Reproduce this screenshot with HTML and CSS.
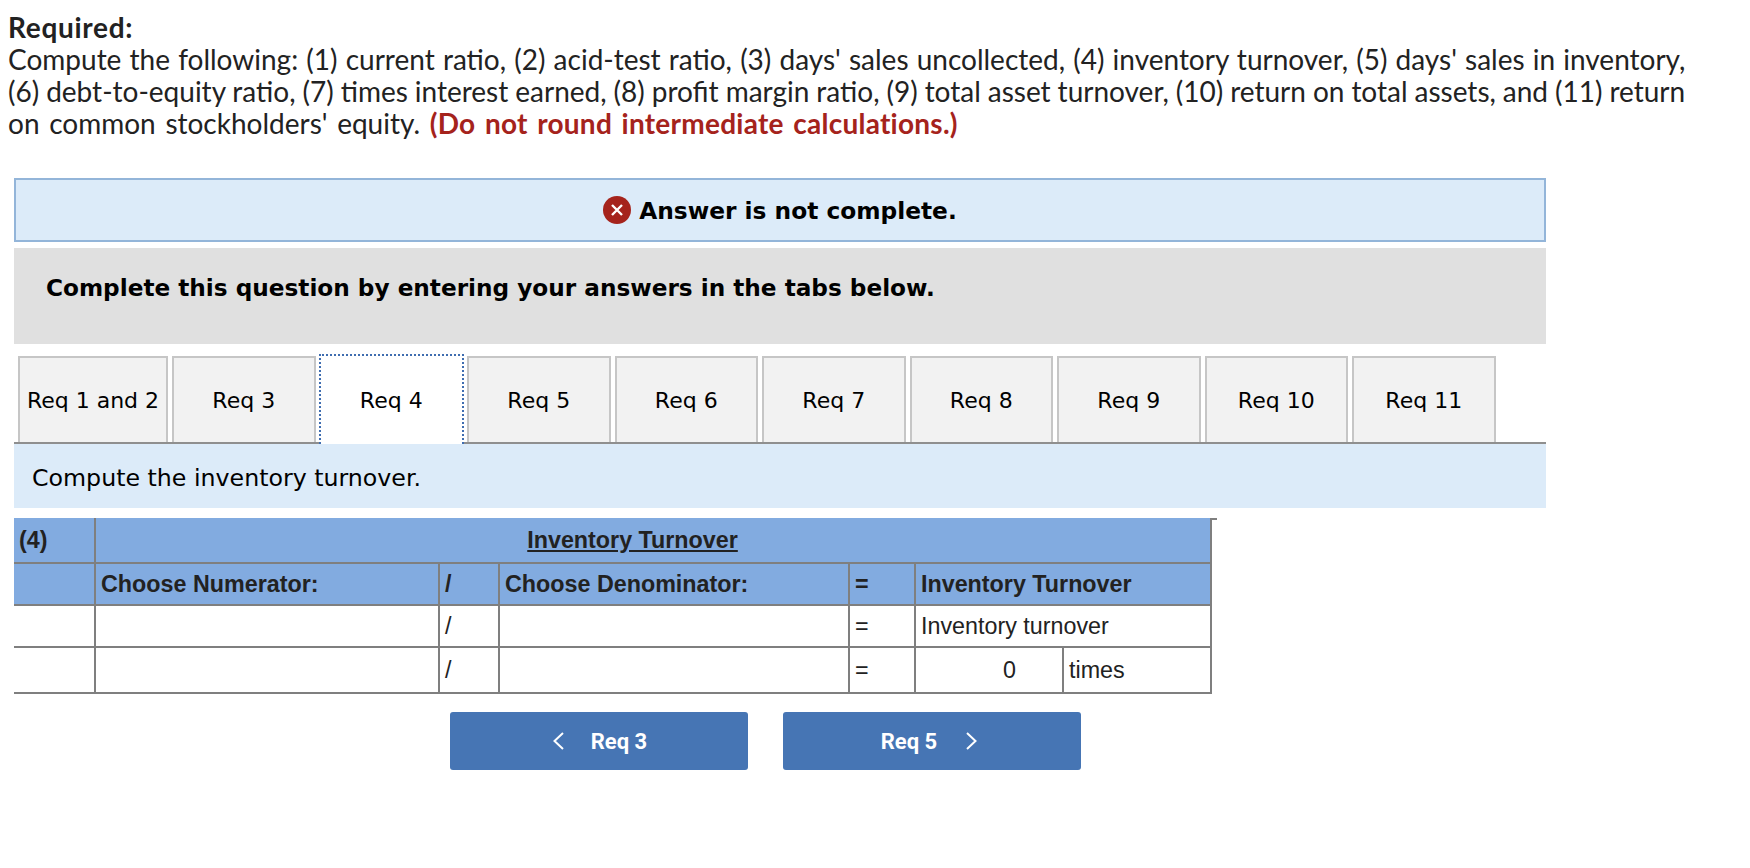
FILE: index.html
```html
<!DOCTYPE html>
<html lang="en">
<head>
  <meta charset="UTF-8">
  <title>Inventory turnover</title>
  <link rel="stylesheet" href="styles.css">
</head>
<body>
  <div class="question">
    <strong class="req">Required:</strong><br>
    <span class="l1">Compute the following: (1) current ratio, (2) acid-test ratio, (3) days' sales uncollected, (4) inventory turnover, (5) days' sales in inventory,</span><br>
    <span class="l2">(6) debt-to-equity ratio, (7) times interest earned, (8) profit margin ratio, (9) total asset turnover, (10) return on total assets, and (11) return</span><br>
    <span class="l3">on common stockholders' equity. <strong class="warn">(Do not round intermediate calculations.)</strong></span>
  </div>

  <div class="quiz">
    <div class="status">
      <svg class="status-icon" viewBox="0 0 28 28" width="28" height="28">
        <circle cx="14" cy="14" r="14" fill="#a5231c"/>
        <path d="M9 9l10 10M19 9L9 19" stroke="#fff" stroke-width="2.4" fill="none"/>
      </svg>
      <span>Answer is not complete.</span>
    </div>

    <div class="intro">Complete this question by entering your answers in the tabs below.</div>

    <div class="tabs">
      <div class="tab first">Req 1 and 2</div>
      <div class="tab">Req 3</div>
      <div class="tab active">Req 4</div>
      <div class="tab">Req 5</div>
      <div class="tab">Req 6</div>
      <div class="tab">Req 7</div>
      <div class="tab">Req 8</div>
      <div class="tab">Req 9</div>
      <div class="tab">Req 10</div>
      <div class="tab">Req 11</div>
    </div>

    <div class="task">Compute the inventory turnover.</div>

    <table class="calc">
      <colgroup>
        <col class="c-num"><col class="c-numer"><col class="c-op"><col class="c-denom"><col class="c-eq"><col class="c-val"><col class="c-unit">
      </colgroup>
      <tr class="head head-top">
        <th>(4)</th>
        <th class="title" colspan="6"><u>Inventory Turnover</u></th>
      </tr>
      <tr class="head">
        <th></th>
        <th>Choose Numerator:</th>
        <th>/</th>
        <th>Choose Denominator:</th>
        <th>=</th>
        <th colspan="2">Inventory Turnover</th>
      </tr>
      <tr>
        <td></td><td></td><td>/</td><td></td><td>=</td>
        <td colspan="2">Inventory turnover</td>
      </tr>
      <tr class="last">
        <td></td><td></td><td>/</td><td></td><td>=</td>
        <td class="val">0</td><td>times</td>
      </tr>
    </table>

    <div class="nav">
      <a class="nav-btn">
        <svg viewBox="0 0 14 20" width="14" height="20"><path d="M12 2L3.5 10l8.500 8" stroke="#fff" stroke-width="2" fill="none"/></svg>
        Req 3
      </a>
      <a class="nav-btn next">
        Req 5
        <svg viewBox="0 0 14 20" width="14" height="20"><path d="M2 2l8.500 8L2 18" stroke="#fff" stroke-width="2" fill="none"/></svg>
      </a>
    </div>
  </div>
</body>
</html>
```

FILE: styles.css
```css
* { box-sizing: border-box; }
body { margin: 0; padding: 11px 8px 0; background: #fff; color: #222; }

.question {
  font-family: Lato, "Open Sans", sans-serif;
  font-size: 28px;
  line-height: 32px;
  white-space: nowrap;
}
.req { letter-spacing: 0.7px; }
.l1 { word-spacing: 1px; }
.l2 { word-spacing: -0.2px; }
.l3 { word-spacing: 2.500px; }
.warn { color: #a5231c; letter-spacing: 0.25px; }

.quiz { width: 1532px; margin: 39px 0 0 6px; }

.status {
  display: flex;
  align-items: center;
  justify-content: center;
  gap: 8px;
  height: 64px;
  background: #dcebf9;
  border: 2px solid #93b5d9;
  font-family: "DejaVu Sans", sans-serif;
  font-size: 23.300px;
  font-weight: bold;
  color: #000;
}
.intro {
  height: 96px;
  margin-top: 6px;
  padding: 25px 32px 0;
  background: #e0e0e0;
  font-family: "DejaVu Sans", sans-serif;
  font-size: 23.200px;
  line-height: 30px;
  font-weight: bold;
  color: #000;
}

.tabs {
  display: flex;
  align-items: flex-start;
  gap: 4px;
  height: 100px;
  padding: 12px 0 0 4px;
  border-bottom: 2px solid #8f8f8f;
}
.tab {
  display: flex;
  align-items: center;
  justify-content: center;
  width: 143.500px;
  height: 86px;
  background: #f2f2f2;
  border: 2px solid #c6c6c6;
  border-bottom: 0;
  font-family: "DejaVu Sans", sans-serif;
  font-size: 22px;
  color: #000;
}
.tab.first { width: 150px; }
.tab.active {
  width: 145.500px;
  height: 90px;
  margin: -2px -1px -2px;
  background: #fff;
  border: 2px dotted #3f6db0;
  border-bottom: 0;
}

.task {
  height: 64px;
  padding: 0 18px;
  background: #dcebf9;
  font-family: "DejaVu Sans", sans-serif;
  font-size: 23.700px;
  line-height: 68px;
  color: #000;
}

.calc {
  width: 1197px;
  margin-top: 10px;
  border-collapse: collapse;
  table-layout: fixed;
  font-family: "Liberation Sans", Arial, sans-serif;
  font-size: 23.300px;
}
.c-num { width: 81px; }
.c-numer { width: 344px; }
.c-op { width: 60px; }
.c-denom { width: 350px; }
.c-eq { width: 66px; }
.c-val { width: 148px; }
.c-unit { width: 148px; }

.calc th, .calc td {
  height: 42px;
  padding: 0 5px;
  border: 2px solid #7f7f7f;
  text-align: left;
}
.calc tr > :first-child { border-left: 0; }
.calc .head-top th { border-top: 0; height: 45px; }
.calc .head-top th.title { position: relative; padding-right: 46px; text-align: center; }
/* stray tick past the table corner */
.calc .head-top th.title::after {
  content: "";
  position: absolute;
  top: 0;
  right: -7px;
  width: 6px;
  height: 2px;
  background: #7f7f7f;
}
.calc .head th { background: #82abe0; }
.calc .last td { height: 46px; }
.calc td.val { padding-left: 46px; text-align: center; }

.nav { display: flex; gap: 35px; margin: 18px 0 0 436px; }
.nav-btn {
  display: flex;
  align-items: center;
  justify-content: center;
  gap: 26px;
  width: 298px;
  height: 58px;
  background: #4675b4;
  border-radius: 3px;
  font-family: Roboto, sans-serif;
  font-size: 22px;
  font-weight: bold;
  color: #fff;
}
.nav-btn.next { gap: 28px; padding-right: 4px; }
```
